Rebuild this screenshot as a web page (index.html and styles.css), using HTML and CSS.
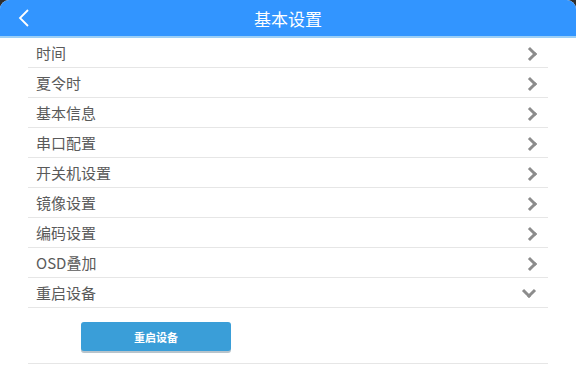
FILE: index.html
```html
<!DOCTYPE html>
<html lang="zh">

<head>
    <meta charset="UTF-8">
    <meta name="viewport" content="width=device-width, initial-scale=1.0">
    <title>基本设置</title>
    <link rel="stylesheet" href="styles.css">
</head>

<body>
    <div class="page">
        <div class="header">
            <span class="back">
                <svg width="14" height="20" viewBox="0 0 14 20">
                    <path d="M11 2 L3 10 L11 18" fill="none" stroke="#fff" stroke-width="1.8" />
                </svg>
            </span>
            <h1>基本设置</h1>
        </div>

        <ul class="menu">
            <li><span>时间</span><i class="arrow"></i></li>
            <li><span>夏令时</span><i class="arrow"></i></li>
            <li><span>基本信息</span><i class="arrow"></i></li>
            <li><span>串口配置</span><i class="arrow"></i></li>
            <li><span>开关机设置</span><i class="arrow"></i></li>
            <li><span>镜像设置</span><i class="arrow"></i></li>
            <li><span>编码设置</span><i class="arrow"></i></li>
            <li><span>OSD叠加</span><i class="arrow"></i></li>
            <li class="open"><span>重启设备</span><i class="arrow down"></i></li>
        </ul>

        <div class="panel">
            <button class="btn">重启设备</button>
        </div>
    </div>
</body>

</html>
```

FILE: styles.css
```css
html {
    background-color: #2e2e2e;
}

body {
    margin: 0;
    font-family: "Microsoft YaHei", "Noto Sans CJK SC", "Noto Sans", sans-serif;
}

.page {
    background-color: #fff;
    height: 368px;
    border-radius: 9px 9px 0 0;
    overflow: hidden;
}

.header {
    height: 36px;
    background-color: #3295ff;
    border-bottom: 2px solid #9ccff6;
    display: flex;
    align-items: center;
    justify-content: center;
    position: relative;
}

.header h1 {
    margin: 0;
    color: #fff;
    font-size: 17px;
    font-weight: normal;
}

.back {
    position: absolute;
    left: 17px;
    top: 8px;
    display: flex;
}

.menu {
    list-style-type: none;
    margin: 0 28px;
    padding: 0;
}

.menu>li {
    height: 29px;
    border-bottom: 1px solid #e6e6e6;
    display: flex;
    align-items: center;
    justify-content: space-between;
    padding: 0 13px 0 8px;
    color: #5a5a5a;
    font-size: 15px;
}

.arrow {
    width: 7px;
    height: 7px;
    border-top: 3px solid #8c8c8c;
    border-right: 3px solid #8c8c8c;
    transform: rotate(45deg);
    margin-top: 2px;
}

.arrow.down {
    transform: rotate(135deg);
    margin-top: -4px;
    margin-right: 1px;
}

.panel {
    margin: 0 28px;
    height: 41px;
    border-bottom: 1px solid #e6e6e6;
    padding: 14px 0 0 53px;
}

.btn {
    width: 150px;
    height: 29px;
    border: none;
    border-radius: 3px;
    background-color: #3a9ed8;
    box-shadow: 0 2px 0 #b8c4cc;
    color: #fff;
    font-family: inherit;
    font-size: 11px;
    font-weight: bold;
}
```
